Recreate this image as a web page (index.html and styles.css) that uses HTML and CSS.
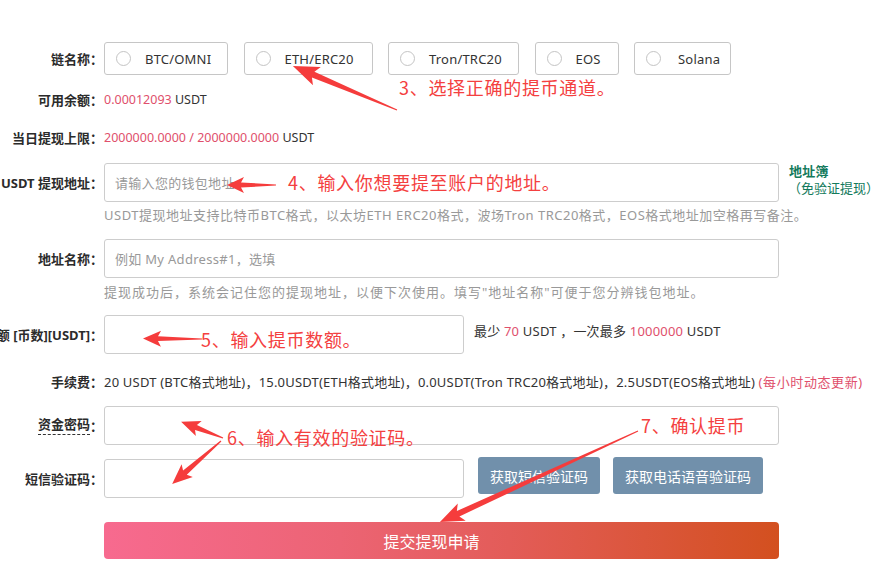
FILE: index.html
```html
<!DOCTYPE html>
<html lang="zh-CN">
<head>
<meta charset="utf-8">
<title>提币</title>
<link rel="stylesheet" href="styles.css">
</head>
<body>
<div class="form">
  <div class="row row-chain">
    <div class="label"><span>链名称：</span></div>
    <div class="options">
      <label class="option opt-btc"><span class="radio"></span><span>BTC/OMNI</span></label>
      <label class="option opt-eth"><span class="radio"></span><span>ETH/ERC20</span></label>
      <label class="option opt-tron"><span class="radio"></span><span>Tron/TRC20</span></label>
      <label class="option opt-eos"><span class="radio"></span><span>EOS</span></label>
      <label class="option opt-sol"><span class="radio"></span><span>Solana</span></label>
    </div>
  </div>

  <div class="row row-text row-balance">
    <div class="label"><span>可用余额：</span></div>
    <div class="value value-num"><span class="num">0.00012093</span> USDT</div>
  </div>

  <div class="row row-text row-limit">
    <div class="label"><span>当日提现上限：</span></div>
    <div class="value value-num"><span class="num">2000000.0000 / 2000000.0000</span> USDT</div>
  </div>

  <div class="row row-field row-address">
    <div class="label"><span>USDT 提现地址：</span></div>
    <input class="field field-wide" type="text" placeholder="请输入您的钱包地址">
    <div class="book">
      <div class="book-title">地址簿</div>
      <div class="book-sub">（免验证提现）</div>
    </div>
  </div>
  <div class="help help-1">USDT提现地址支持比特币BTC格式，以太坊ETH ERC20格式，波场Tron TRC20格式，EOS格式地址加空格再写备注。</div>

  <div class="row row-field row-name">
    <div class="label"><span>地址名称：</span></div>
    <input class="field field-wide" type="text" placeholder="例如 My Address#1，选填">
  </div>
  <div class="help help-2">提现成功后，系统会记住您的提现地址，以便下次使用。填写"地址名称"可便于您分辨钱包地址。</div>

  <div class="row row-field row-amount">
    <div class="label"><span>提现数额 [币数][USDT]：</span></div>
    <input class="field field-narrow" type="text">
    <div class="side">最少 <span class="num">70</span> USDT ，一次最多 <span class="num">1000000</span> USDT</div>
  </div>

  <div class="row row-text row-fee">
    <div class="label"><span>手续费：</span></div>
    <div class="value">20 USDT (BTC格式地址)，15.0USDT(ETH格式地址)，0.0USDT(Tron TRC20格式地址)，2.5USDT(EOS格式地址) <span class="num">(每小时动态更新)</span></div>
  </div>

  <div class="row row-field row-pwd">
    <div class="label"><span class="dashed">资金密码</span><span>：</span></div>
    <input class="field field-wide" type="password">
  </div>

  <div class="row row-field row-sms">
    <div class="label"><span>短信验证码：</span></div>
    <input class="field field-narrow" type="text">
    <button class="btn-code" type="button">获取短信验证码</button>
    <button class="btn-code" type="button">获取电话语音验证码</button>
  </div>

  <div class="row row-submit">
    <div class="label"></div>
    <button class="btn-submit" type="button">提交提现申请</button>
  </div>
</div>

<svg class="arrows" width="883" height="576" viewBox="0 0 883 576" xmlns="http://www.w3.org/2000/svg">
  <g fill="#f53c3c">
    <polygon transform="translate(397 110) rotate(-157.1)" points="0,-0.6 91,-3.2 87,-10 113,0 87,10 91,3.2 0,0.6"/>
    <polygon transform="translate(276 185) rotate(180)" points="0,-0.6 35,-2.6 32,-8 49,0 32,8 35,2.6 0,0.6"/>
    <polygon transform="translate(202 339) rotate(180.5)" points="0,-0.6 44,-2.4 41,-8 59,0 41,8 44,2.4 0,0.6"/>
    <polygon transform="translate(223 438) rotate(-158.7)" points="0,-0.6 29,-2.6 26,-8 45,0 26,8 29,2.6 0,0.6"/>
    <polygon transform="translate(221 441) rotate(138.7)" points="0,-0.6 48,-2.8 45,-8.5 65,0 45,8.5 48,2.8 0,0.6"/>
    <polygon transform="translate(638 431) rotate(155.3)" points="0,-0.6 198,-3 194,-9.5 218,0 194,9.5 198,3 0,0.6"/>
  </g>
</svg>
<div class="note note-3">3、选择正确的提币通道。</div>
<div class="note note-4">4、输入你想要提至账户的地址。</div>
<div class="note note-5">5、输入提币数额。</div>
<div class="note note-6">6、输入有效的验证码。</div>
<div class="note note-7">7、确认提币</div>
</body>
</html>
```

FILE: styles.css
```css
* { box-sizing: border-box; }

html, body {
  margin: 0;
  padding: 0;
  background: #fff;
}

body {
  position: relative;
  width: 883px;
  height: 576px;
  overflow: hidden;
  font-family: "Noto Sans", "Noto Sans CJK SC", sans-serif;
  font-size: 13px;
  color: #333;
  letter-spacing: 0.2px;
}

.form {
  padding-top: 42px;
}

.row {
  display: flex;
  align-items: center;
}

.label {
  width: 103px;
  flex: none;
  display: flex;
  justify-content: flex-end;
  white-space: nowrap;
  font-weight: bold;
  color: #2b2b2b;
  font-size: 13px;
  letter-spacing: 0;
  margin-right: 1px;
}

.dashed {
  border-bottom: 1px dashed #333;
  line-height: 17px;
}

.row-chain { height: 33px; }

.options {
  display: flex;
  gap: 15.5px;
}

.option {
  height: 33px;
  display: flex;
  align-items: center;
  padding: 0 0 0 11px;
  border: 1px solid #c6c6c6;
  border-radius: 3px;
  color: #333;
  white-space: nowrap;
  flex: none;
}

.opt-btc { width: 124px; }
.opt-eth { width: 129px; }
.opt-tron { width: 131px; }
.opt-eos { width: 84px; }
.opt-sol { width: 97px; padding-left: 11px; }
.opt-sol .radio { margin-right: 17px; }

.radio {
  width: 15px;
  height: 15px;
  border: 1px solid #c4c4c4;
  border-radius: 50%;
  margin-right: 14px;
  background: #fff;
  flex: none;
}

.row-text {
  height: 20px;
  line-height: 20px;
}

.value { white-space: nowrap; }

.value-num {
  font-size: 12.5px;
  letter-spacing: 0;
}

.num { color: #e0506c; }

.row-balance { margin-top: 15px; }
.row-limit { margin-top: 18px; }
.row-address { margin-top: 15px; height: 39px; }
.help-1 { margin-top: 3px; letter-spacing: 0.5px; }
.row-name { margin-top: 14px; height: 39px; }
.help-2 { margin-top: 4px; letter-spacing: 1px; }
.row-amount { margin-top: 13px; height: 39px; }
.row-fee { margin-top: 18px; }
.row-pwd { margin-top: 14px; height: 39px; }
.row-sms { margin-top: 14px; height: 39px; }
.row-submit { margin-top: 24px; height: 37px; }

.row-fee .num { letter-spacing: 0.6px; }

.field {
  height: 39px;
  border: 1px solid #cdcdcd;
  border-radius: 3px;
  padding: 0 10px;
  font-family: "Noto Sans", "Noto Sans CJK SC", sans-serif;
  font-size: 13px;
  color: #333;
  background: #fff;
  outline: none;
  flex: none;
  letter-spacing: 0.3px;
}

.field::placeholder { color: #999; }

.field-wide { width: 675px; }
.field-narrow { width: 360px; }

.book {
  align-self: flex-start;
  margin-left: 10px;
  line-height: 17px;
  color: #137a5c;
  white-space: nowrap;
}

.book-title { font-weight: bold; }

.book-sub { margin-left: -1px; letter-spacing: 0; }

.help {
  margin-left: 104px;
  height: 20px;
  line-height: 20px;
  color: #999;
  white-space: nowrap;
}

.side {
  align-self: flex-start;
  margin-top: 6px;
  margin-left: 10px;
  line-height: 20px;
  white-space: nowrap;
}

.btn-code {
  align-self: flex-start;
  margin-top: -2px;
  height: 37px;
  padding: 0 12px;
  border: none;
  border-radius: 3px;
  background: #7190ab;
  color: #fff;
  font-family: "Noto Sans CJK SC", sans-serif;
  font-size: 14px;
  letter-spacing: 0;
  white-space: nowrap;
}

.row-sms .btn-code:first-of-type { margin-left: 14px; }
.row-sms .btn-code + .btn-code { margin-left: 13px; }

.btn-submit {
  width: 675px;
  height: 37px;
  border: none;
  border-radius: 4px;
  background: linear-gradient(to right, #f76a8f 0%, #ec6474 35%, #e35c58 60%, #d3501f 100%);
  color: #fff;
  font-family: "Noto Sans CJK SC", sans-serif;
  font-size: 16px;
  letter-spacing: 0;
  padding: 0 20px 0 0;
}

.arrows {
  position: absolute;
  left: 0;
  top: 0;
  pointer-events: none;
}

.note {
  position: absolute;
  font-family: "Noto Sans CJK SC", sans-serif;
  font-size: 18px;
  line-height: 18px;
  color: #f44040;
  white-space: nowrap;
  letter-spacing: 0.7px;
}

.note-3 { left: 399px; top: 78px; }
.note-4 { left: 288px; top: 173px; }
.note-5 { left: 201px; top: 330px; }
.note-6 { left: 227px; top: 428px; }
.note-7 { left: 641px; top: 416px; }
```
